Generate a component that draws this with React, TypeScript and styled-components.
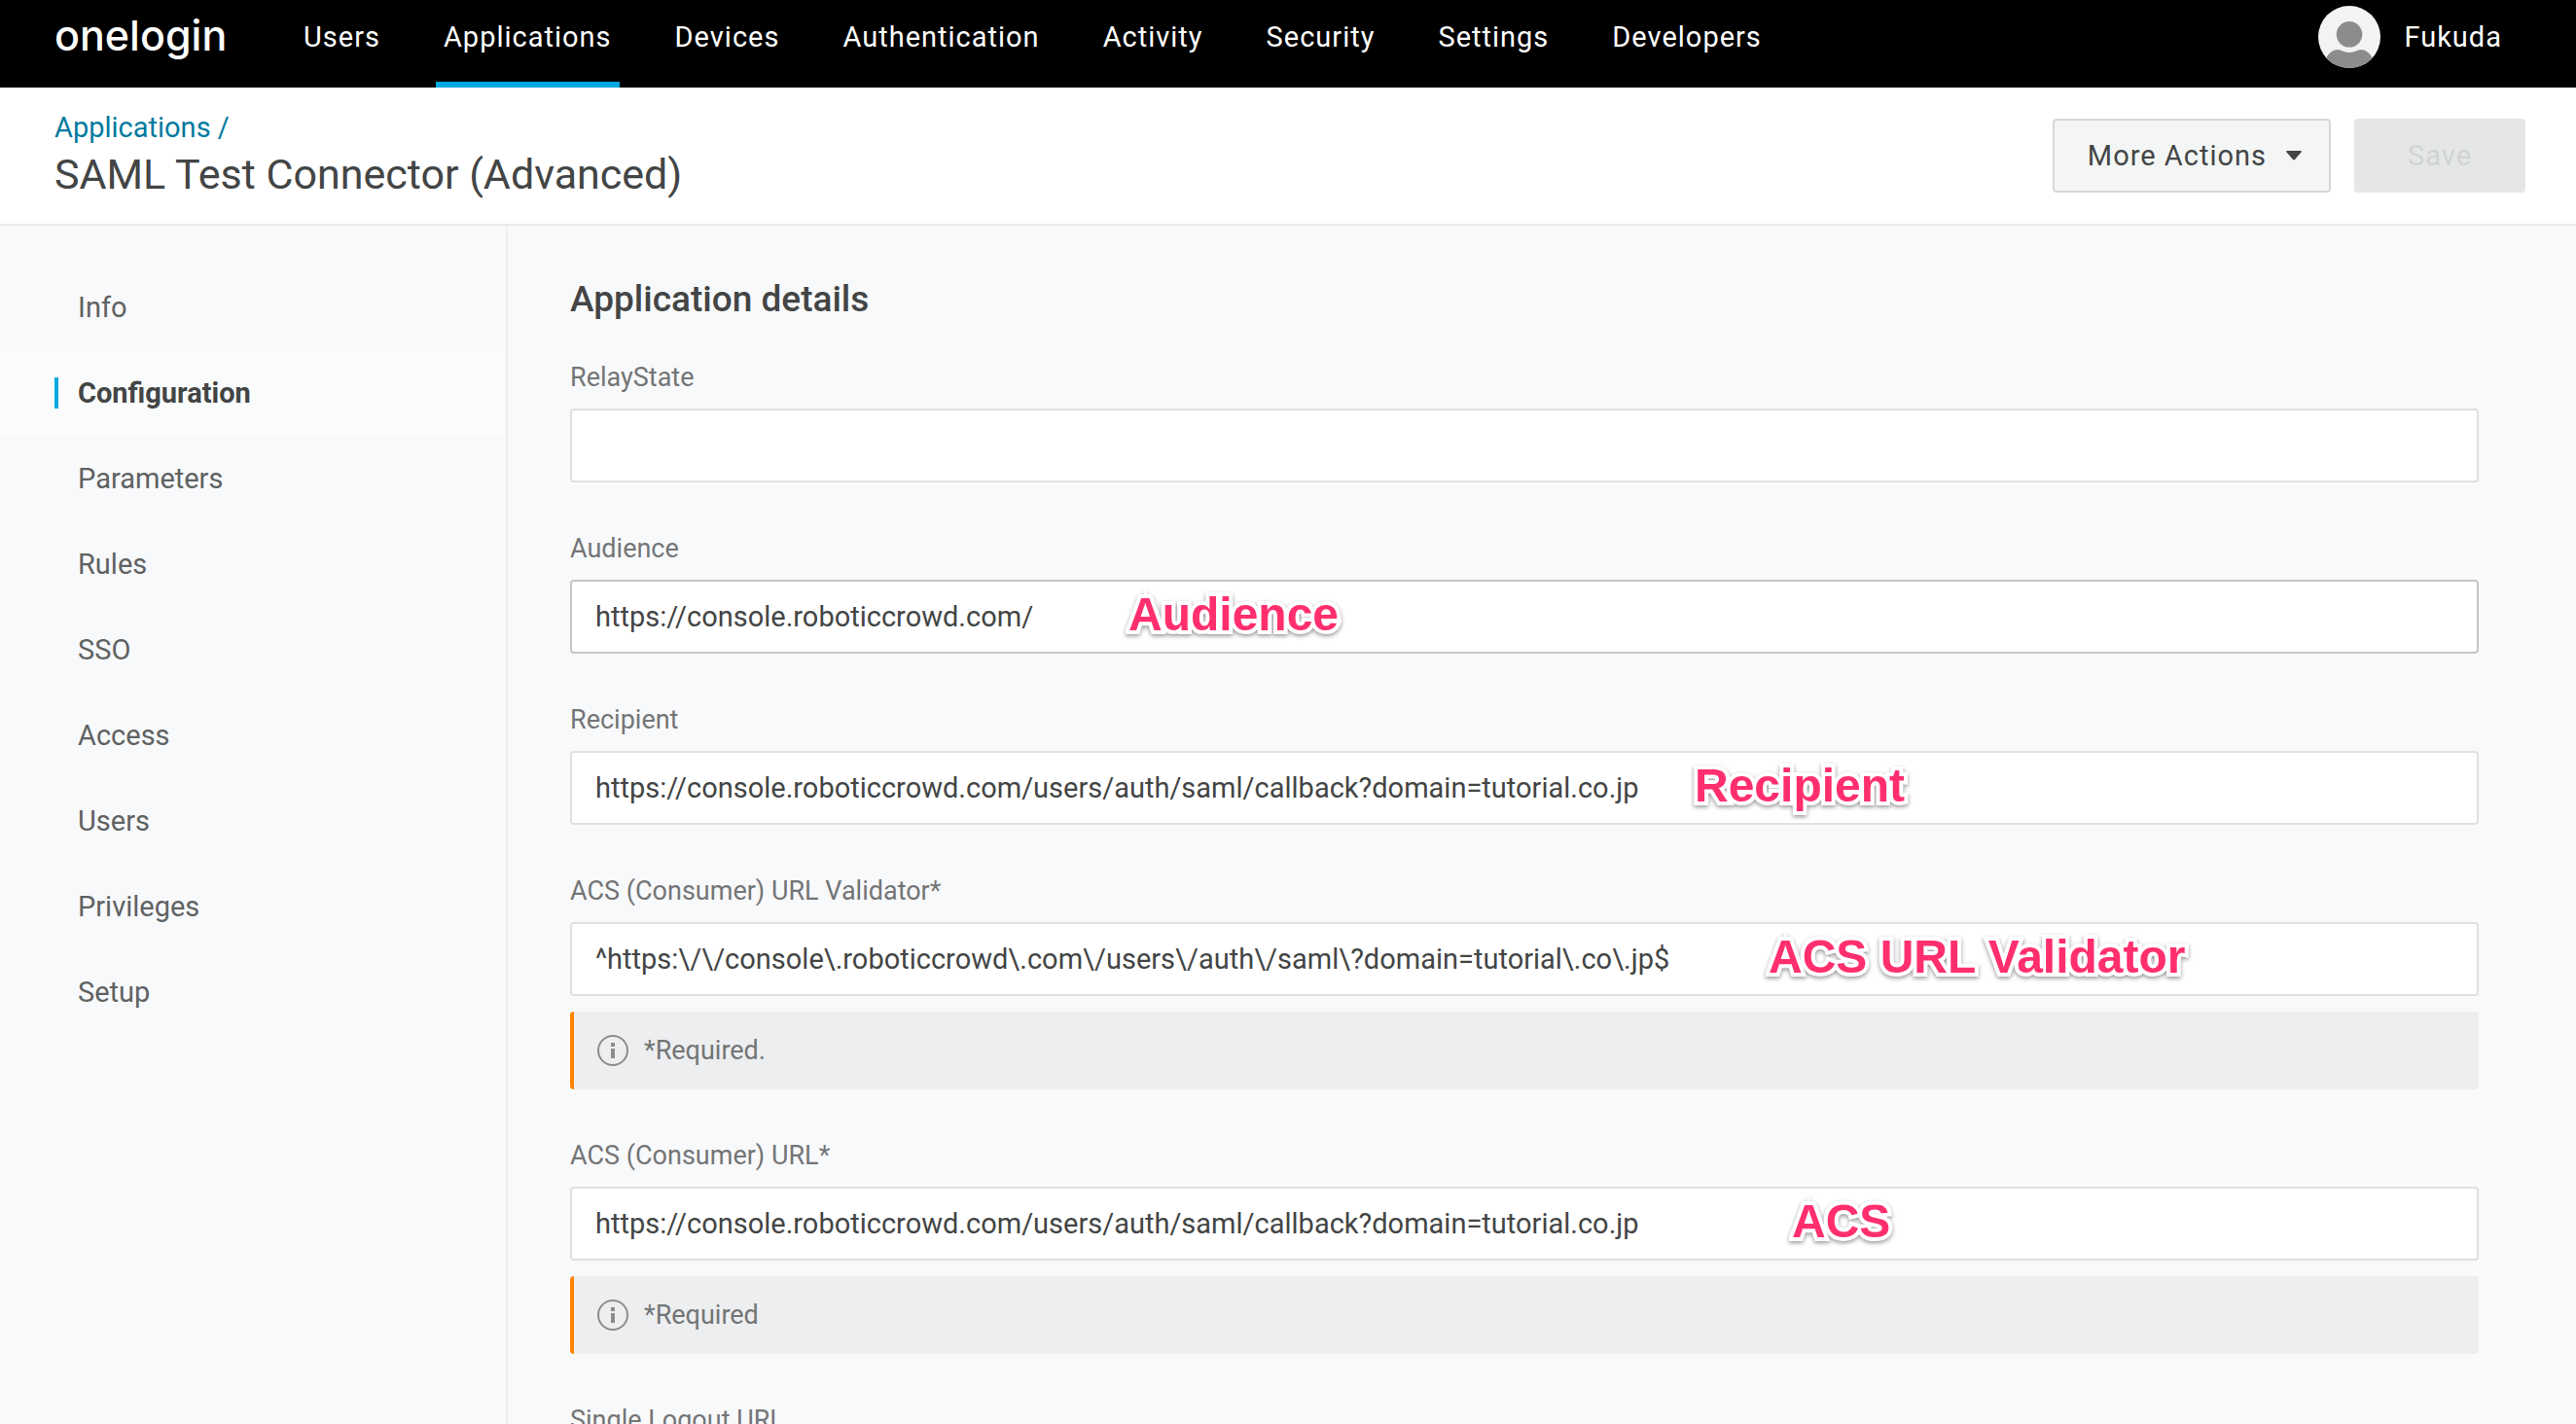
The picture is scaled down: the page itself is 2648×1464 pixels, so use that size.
import React from "react";
import styled, { createGlobalStyle } from "styled-components";

const Global = createGlobalStyle`
  *, *::before, *::after { box-sizing: border-box; }
  body { margin: 0; background: #f8f9fb; color: #434545; font-family: Roboto, "Noto Sans", sans-serif; font-size: 29px; }
  #root { display: block; }
  button, input { font: inherit; }
  a { text-decoration: none; color: inherit; }
`;

const Page = styled.div`
  display: flex;
  flex-direction: column;
  height: 100vh;
  overflow: hidden;
`;

const TopBar = styled.header`
  display: flex;
  flex: none;
  align-items: flex-start;
  height: 90px;
  padding: 0 76px 0 56px;
  background: #000;
  color: #fff;
`;

const Logo = styled.a`
  flex: none;
  width: 184px;
  font-family: Inter, sans-serif;
  font-weight: 500;
  font-size: 43px;
  line-height: 72px;
`;

const Nav = styled.nav`
  display: flex;
  flex: 1;
  gap: 49px;
  margin-left: 64px;
`;

const NavLink = styled.a<{ $active?: boolean }>`
  height: 90px;
  padding: 0 8px;
  line-height: 76px;
  letter-spacing: 1px;
  border-bottom: 6px solid ${(p) => (p.$active ? "#00a8e1" : "transparent")};
`;

const Account = styled.button`
  display: flex;
  align-items: center;
  gap: 24px;
  height: 76px;
  padding: 0;
  border: 0;
  background: none;
  color: #fff;
  letter-spacing: 1px;
`;

const TitleBar = styled.div`
  display: flex;
  flex: none;
  align-items: center;
  justify-content: space-between;
  height: 142px;
  padding: 0 52px 0 56px;
  background: #fff;
  border-bottom: 2px solid #e6e8ea;
`;

const Crumb = styled.a`
  display: block;
  line-height: 40px;
  color: #007a9f;
`;

const Title = styled.h1`
  margin: 0 0 2px;
  font-size: 43px;
  font-weight: 400;
  line-height: 56px;
`;

const Actions = styled.div`
  display: flex;
  gap: 24px;
`;

const Button = styled.button`
  display: flex;
  align-items: center;
  justify-content: center;
  gap: 20px;
  min-width: 176px;
  height: 76px;
  padding: 0 28px 0 34px;
  border: 2px solid #d5d8d7;
  border-radius: 4px;
  background: #f4f6f5;
  color: #434545;
  letter-spacing: 1px;

  &:disabled {
    padding: 0 32px;
    border-color: #e5e7e6;
    background: #e5e7e6;
    color: #d1d4d3;
  }
`;

const Body = styled.div`
  display: flex;
  flex: 1;
  min-height: 0;
`;

const Sidebar = styled.nav`
  flex: none;
  width: 522px;
  padding-top: 40px;
  border-right: 2px solid #eceef0;
`;

const SideLink = styled.a<{ $active?: boolean }>`
  display: flex;
  align-items: center;
  height: 88px;
  padding-left: 56px;
  color: ${(p) => (p.$active ? "#434545" : "#5f6262")};
  font-weight: ${(p) => (p.$active ? 700 : 400)};
  background: ${(p) => (p.$active ? "#fafcfc" : "transparent")};

  &::before {
    content: "";
    width: 4px;
    height: 32px;
    margin-right: 20px;
    background: ${(p) => (p.$active ? "#00a8e1" : "transparent")};
  }
`;

const Main = styled.main`
  flex: 1;
  min-width: 0;
  padding: 52px 100px 0 64px;
`;

const Heading = styled.h2`
  margin: 0 0 40px;
  font-size: 37px;
  font-weight: 500;
  line-height: 48px;
`;

const Form = styled.form`
  display: flex;
  flex-direction: column;
  gap: 52px;
`;

const Label = styled.label`
  display: block;
  margin-bottom: 16px;
  font-size: 27px;
  line-height: 32px;
  color: #737576;
`;

const InputWrap = styled.div`
  position: relative;
`;

const Input = styled.input<{ $strong?: boolean }>`
  display: block;
  width: 100%;
  height: 76px;
  padding: 0 24px;
  border: 2px solid ${(p) => (p.$strong ? "#c4c6c7" : "#dfe0e1")};
  border-radius: 4px;
  background: #fff;
  color: #434545;
  outline: none;
`;

const Callout = styled.span<{ $left: number }>`
  position: absolute;
  top: 0;
  left: ${(p) => p.$left}px;
  color: #ff2f6e;
  font: bold 48px / 72px "Liberation Sans", Arial, sans-serif;
  white-space: nowrap;
  -webkit-text-stroke: 8px #fff;
  stroke-linejoin: round;
  paint-order: stroke fill;
  filter: drop-shadow(0 2px 2px rgba(0, 0, 0, 0.4));
  pointer-events: none;
`;

const Note = styled.p`
  display: flex;
  align-items: center;
  gap: 16px;
  height: 80px;
  margin: 16px 0 0;
  padding-left: 24px;
  border-left: 4px solid #ff8200;
  border-radius: 4px;
  background: #edeef0;
  color: #737576;
  font-size: 27px;
`;

const InfoIcon = () => (
  <svg width="32" height="32" viewBox="0 0 32 32" aria-hidden="true">
    <circle cx="16" cy="16" r="15" fill="none" stroke="#8b8d8d" strokeWidth="2" />
    <rect x="14" y="8" width="4" height="4" fill="#8b8d8d" />
    <rect x="14" y="14" width="4" height="10" fill="#8b8d8d" />
  </svg>
);

const Avatar = () => (
  <svg width="64" height="64" viewBox="0 0 64 64" aria-hidden="true">
    <clipPath id="face">
      <circle cx="32" cy="32" r="32" />
    </clipPath>
    <g clipPath="url(#face)">
      <rect width="64" height="64" fill="#f3f3f3" />
      <circle cx="32" cy="29.300" r="13.300" fill="#8b8d8c" />
      <path d="M8 54C11 48 16 45 20 45C24 45 26 48 32 48C38 48 40 45 44 45C48 45 53 48 56 54V64H8Z" fill="#8b8d8c" />
    </g>
  </svg>
);

const Caret = () => (
  <svg width="16" height="10" viewBox="0 0 16 10" aria-hidden="true">
    <path d="M1 0H15Q16.500 0 15.500 1.500L9 9Q8 10 7 9L.5 1.500Q-.5 0 1 0Z" fill="#434545" />
  </svg>
);

const navItems = ["Users", "Applications", "Devices", "Authentication", "Activity", "Security", "Settings", "Developers"];
const sideItems = ["Info", "Configuration", "Parameters", "Rules", "SSO", "Access", "Users", "Privileges", "Setup"];

type FieldData = {
  id: string;
  label: string;
  value?: string;
  strong?: boolean;
  callout?: string;
  left?: number;
  note?: string;
};

const callback = "https://console.roboticcrowd.com/users/auth/saml/callback?domain=tutorial.co.jp";

const fields: FieldData[] = [
  { id: "relay", label: "RelayState" },
  { id: "audience", label: "Audience", value: "https://console.roboticcrowd.com/", strong: true, callout: "Audience", left: 574 },
  { id: "recipient", label: "Recipient", value: callback, callout: "Recipient", left: 1156 },
  {
    id: "validator",
    label: "ACS (Consumer) URL Validator*",
    value: "^https:\\/\\/console\\.roboticcrowd\\.com\\/users\\/auth\\/saml\\?domain=tutorial\\.co\\.jp$",
    callout: "ACS URL Validator",
    left: 1232,
    note: "*Required.",
  },
  { id: "acs", label: "ACS (Consumer) URL*", value: callback, callout: "ACS", left: 1256, note: "*Required" },
  { id: "logout", label: "Single Logout URL" },
];

const Field = ({ id, label, value = "", strong, callout, left = 0, note }: FieldData) => (
  <div>
    <Label htmlFor={id}>{label}</Label>
    <InputWrap>
      <Input id={id} type="text" defaultValue={value} $strong={strong} />
      {callout && <Callout $left={left}>{callout}</Callout>}
    </InputWrap>
    {note && (
      <Note>
        <InfoIcon />
        {note}
      </Note>
    )}
  </div>
);

export default function App() {
  return (
    <Page>
      <Global />
      <TopBar>
        <Logo href="#">onelogin</Logo>
        <Nav>
          {navItems.map((item) => (
            <NavLink key={item} href="#" $active={item === "Applications"}>
              {item}
            </NavLink>
          ))}
        </Nav>
        <Account type="button">
          <Avatar />
          Fukuda
        </Account>
      </TopBar>
      <TitleBar>
        <div>
          <Crumb href="#">Applications /</Crumb>
          <Title>SAML Test Connector (Advanced)</Title>
        </div>
        <Actions>
          <Button type="button">
            More Actions
            <Caret />
          </Button>
          <Button type="button" disabled>
            Save
          </Button>
        </Actions>
      </TitleBar>
      <Body>
        <Sidebar>
          {sideItems.map((item) => (
            <SideLink key={item} href="#" $active={item === "Configuration"}>
              {item}
            </SideLink>
          ))}
        </Sidebar>
        <Main>
          <Heading>Application details</Heading>
          <Form>
            {fields.map((field) => (
              <Field key={field.id} {...field} />
            ))}
          </Form>
        </Main>
      </Body>
    </Page>
  );
}
